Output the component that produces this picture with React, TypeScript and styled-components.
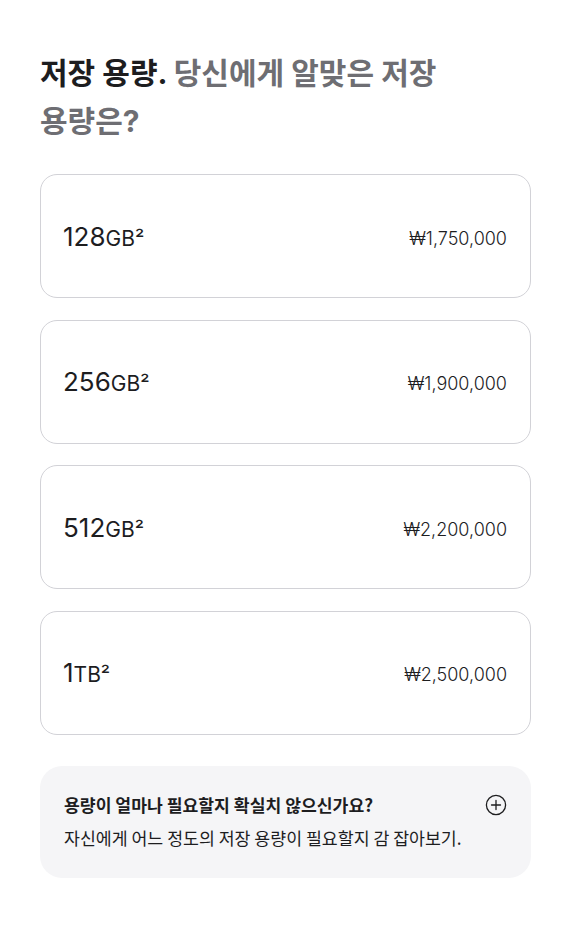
import React from 'react'
import styled, { createGlobalStyle } from 'styled-components'

const GlobalStyle = createGlobalStyle`
    body {
        margin: 0;
        background: #FFFFFF;
        font-family: Inter, "Noto Sans CJK KR", sans-serif;
        color: #1d1d1f;
    }
`

const Page = styled.div`
    width: 491px;
    padding: 49px 0 40px 40px;
`

const Heading = styled.h2`
    margin: 0;
    font-family: Inter, "Noto Sans CJK KR", sans-serif;
    font-weight: 700;
    font-size: 30px;
    line-height: 48px;
    color: #1d1d1f;
    max-width: 420px;
    word-break: keep-all;
`

const Muted = styled.span`
    color: #6e6e73;
`

const List = styled.div`
    display: flex;
    flex-direction: column;
    gap: 21.6px;
    margin-top: 29px;
`

const Card = styled.div`
    display: flex;
    align-items: center;
    justify-content: space-between;
    box-sizing: border-box;
    height: 124px;
    padding: 0 23px 0 22px;
    border: 1px solid #d2d2d7;
    border-radius: 17px;
    background: #FFFFFF;
`

const Capacity = styled.div`
    font-size: 26px;
    font-weight: 400;
    color: #1d1d1f;
`

const Unit = styled.span`
    font-size: 21px;
`

const Price = styled.div`
    margin-top: 4px;
    font-size: 18px;
    font-weight: 300;
    color: #1d1d1f;
`

const Help = styled.div`
    display: flex;
    justify-content: space-between;
    align-items: flex-start;
    margin-top: 31px;
    padding: 26px 24px 28px 24px;
    background: #f5f5f7;
    border-radius: 22px;
`

const HelpText = styled.div`
    font-family: "Noto Sans CJK KR", sans-serif;
`

const HelpTitle = styled.div`
    font-size: 17.2px;
    font-weight: 700;
    line-height: 25px;
    color: #1d1d1f;
`

const HelpBody = styled.div`
    margin-top: 8px;
    font-size: 17.3px;
    line-height: 25px;
    color: #1d1d1f;
`

const PlusIcon = styled.svg`
    width: 22px;
    height: 22px;
    margin-top: 2px;
    flex-shrink: 0;
`

const options = [
    { size: '128', unit: 'GB²', price: '₩1,750,000' },
    { size: '256', unit: 'GB²', price: '₩1,900,000' },
    { size: '512', unit: 'GB²', price: '₩2,200,000' },
    { size: '1', unit: 'TB²', price: '₩2,500,000' },
]

export default function App() {
    return (
        <>
            <GlobalStyle />
            <Page>
                <Heading>
                    저장 용량. <Muted>당신에게 알맞은 저장 용량은?</Muted>
                </Heading>
                <List>
                    {options.map(item => (
                        <Card key={item.size}>
                            <Capacity>{item.size}<Unit>{item.unit}</Unit></Capacity>
                            <Price>{item.price}</Price>
                        </Card>
                    ))}
                </List>
                <Help>
                    <HelpText>
                        <HelpTitle>용량이 얼마나 필요할지 확실치 않으신가요?</HelpTitle>
                        <HelpBody>자신에게 어느 정도의 저장 용량이 필요할지 감 잡아보기.</HelpBody>
                    </HelpText>
                    <PlusIcon viewBox="0 0 22 22">
                        <circle cx="11" cy="11" r="9.6" fill="none" stroke="#1d1d1f" strokeWidth="1.3" />
                        <path d="M11 6.5v9M6.5 11h9" stroke="#1d1d1f" strokeWidth="1.3" strokeLinecap="round" />
                    </PlusIcon>
                </Help>
            </Page>
        </>
    )
}
